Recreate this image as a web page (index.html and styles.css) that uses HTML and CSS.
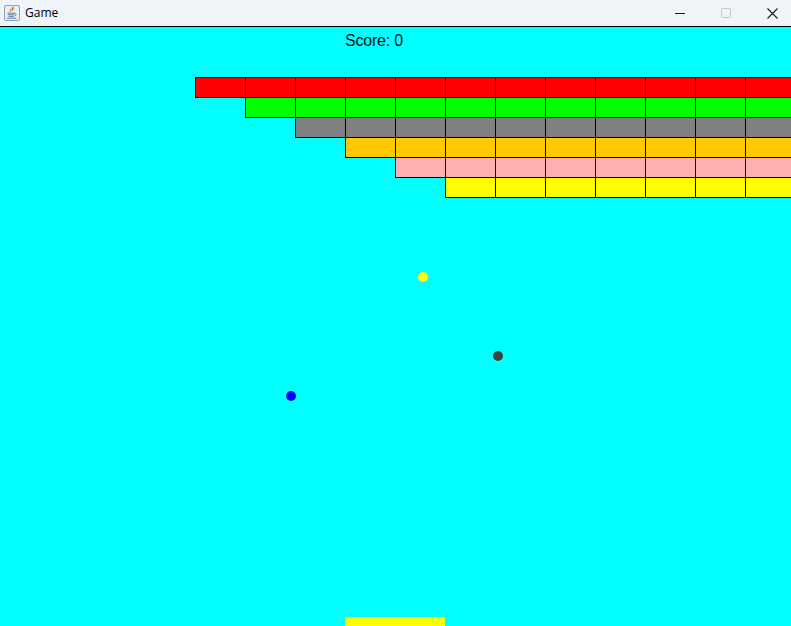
FILE: index.html
```html
<!DOCTYPE html>
<html>
<head>
<meta charset="utf-8">
<title>Game</title>
<link rel="stylesheet" href="styles.css">
</head>
<body>
<div class="window">
  <header class="titlebar">
    <div class="title-left">
      <svg class="app-icon" width="16" height="16" viewBox="0 0 16 16">
        <rect x="0.5" y="0.5" width="15" height="15" rx="1.5" fill="#e9eef5" stroke="#8ea3bd"/>
        <path d="M8.2 2.2c1.2 1 -1.4 1.9 0.2 3.4c-0.4-1.2 1.9-1.6 0.6-3.6" fill="none" stroke="#e76f00" stroke-width="1.1"/>
        <path d="M6.6 4.2c-1.5 0.9 0.6 1.4 -0.2 2.6" fill="none" stroke="#e76f00" stroke-width="0.9"/>
        <path d="M3.5 8.2h7.5M3.8 9.8h6.6M4.6 11.4h5" stroke="#5382a1" stroke-width="1"/>
        <path d="M11 8.6c1.8 -0.3 1.8 1.9 -0.4 2.2" fill="none" stroke="#5382a1" stroke-width="0.9"/>
        <path d="M2.8 13.2h9.4" stroke="#5382a1" stroke-width="1"/>
      </svg>
      <span class="title-text">Game</span>
    </div>
    <div class="controls">
      <div class="ctrl">
        <svg width="10" height="10" viewBox="0 0 10 10"><path d="M0 5.5h10" stroke="#1a1a1a" stroke-width="1"/></svg>
      </div>
      <div class="ctrl">
        <svg width="10" height="10" viewBox="0 0 10 10"><rect x="0.5" y="0.5" width="9" height="9" rx="1" fill="none" stroke="#c4c7cc" stroke-width="1"/></svg>
      </div>
      <div class="ctrl">
        <svg width="11" height="11" viewBox="0 0 11 11"><path d="M0.5 0.5l10 10M10.5 0.5l-10 10" stroke="#1a1a1a" stroke-width="1.1"/></svg>
      </div>
    </div>
  </header>
  <main class="game">
    <div class="score">Score: 0</div>
    <div class="bricks">
      <div class="row row-0">
        <div class="brick red"></div><div class="brick red"></div><div class="brick red"></div><div class="brick red"></div><div class="brick red"></div><div class="brick red"></div><div class="brick red"></div><div class="brick red"></div><div class="brick red"></div><div class="brick red"></div><div class="brick red"></div><div class="brick red"></div>
      </div>
      <div class="row row-1">
        <div class="brick green"></div><div class="brick green"></div><div class="brick green"></div><div class="brick green"></div><div class="brick green"></div><div class="brick green"></div><div class="brick green"></div><div class="brick green"></div><div class="brick green"></div><div class="brick green"></div><div class="brick green"></div>
      </div>
      <div class="row row-2">
        <div class="brick gray"></div><div class="brick gray"></div><div class="brick gray"></div><div class="brick gray"></div><div class="brick gray"></div><div class="brick gray"></div><div class="brick gray"></div><div class="brick gray"></div><div class="brick gray"></div><div class="brick gray"></div>
      </div>
      <div class="row row-3">
        <div class="brick orange"></div><div class="brick orange"></div><div class="brick orange"></div><div class="brick orange"></div><div class="brick orange"></div><div class="brick orange"></div><div class="brick orange"></div><div class="brick orange"></div><div class="brick orange"></div>
      </div>
      <div class="row row-4">
        <div class="brick pink"></div><div class="brick pink"></div><div class="brick pink"></div><div class="brick pink"></div><div class="brick pink"></div><div class="brick pink"></div><div class="brick pink"></div><div class="brick pink"></div>
      </div>
      <div class="row row-5">
        <div class="brick yellow"></div><div class="brick yellow"></div><div class="brick yellow"></div><div class="brick yellow"></div><div class="brick yellow"></div><div class="brick yellow"></div><div class="brick yellow"></div>
      </div>
    </div>
    <div class="ball ball-yellow"></div>
    <div class="ball ball-dark"></div>
    <div class="ball ball-blue"></div>
    <div class="paddle"></div>
  </main>
</div>
</body>
</html>
```

FILE: styles.css
```css
html, body {
  margin: 0;
  padding: 0;
  width: 791px;
  height: 626px;
  overflow: hidden;
}

.window {
  width: 791px;
  height: 626px;
  display: flex;
  flex-direction: column;
  overflow: hidden;
}

.titlebar {
  height: 26px;
  flex: 0 0 26px;
  background: #eff4f9;
  border-bottom: 1px solid #000;
  display: flex;
  align-items: center;
  justify-content: space-between;
}

.title-left {
  display: flex;
  align-items: center;
  padding-left: 4px;
  gap: 5px;
}

.app-icon {
  display: block;
}

.title-text {
  font-family: "Segoe UI", "Open Sans", "Noto Sans", sans-serif;
  font-size: 12px;
  color: #000;
  line-height: 16px;
}

.controls {
  display: flex;
  height: 26px;
  margin-right: -4px;
}

.ctrl {
  width: 46px;
  height: 26px;
  display: flex;
  align-items: center;
  justify-content: center;
}

.ctrl svg {
  display: block;
}

.game {
  position: relative;
  flex: 1 1 auto;
  background: #00ffff;
  overflow: hidden;
}

.score {
  margin-top: 6px;
  padding-left: 345px;
  font-family: "Liberation Sans", Arial, sans-serif;
  font-size: 16px;
  line-height: 16px;
  height: 16px;
  color: #111;
  letter-spacing: -0.2px;
}

.bricks {
  margin-top: 28px;
  display: flex;
  flex-direction: column;
}

.row {
  display: flex;
  flex-wrap: nowrap;
  height: 21px;
}

.row + .row {
  margin-top: -1px;
}

.row-0 { padding-left: 195px; }
.row-1 { padding-left: 245px; }
.row-2 { padding-left: 295px; }
.row-3 { padding-left: 345px; }
.row-4 { padding-left: 395px; }
.row-5 { padding-left: 445px; }

.brick {
  flex: 0 0 51px;
  width: 51px;
  height: 21px;
  box-sizing: border-box;
  border: 1px solid #000;
  margin-right: -1px;
}

.red { background: #ff0000; }
.green { background: #00ff00; }
.gray { background: #808080; }
.orange { background: #ffc800; }
.pink { background: #ffafaf; }
.yellow { background: #ffff00; }

.ball {
  position: absolute;
  width: 10px;
  height: 10px;
  border-radius: 50%;
}

.ball-yellow {
  left: 418px;
  top: 245px;
  background: #ffff00;
}

.ball-dark {
  left: 493px;
  top: 324px;
  background: #404040;
}

.ball-blue {
  left: 286px;
  top: 364px;
  background: #0000ff;
}

.paddle {
  position: absolute;
  left: 345px;
  top: 590px;
  width: 100px;
  height: 12px;
  background: #ffff00;
}
```
